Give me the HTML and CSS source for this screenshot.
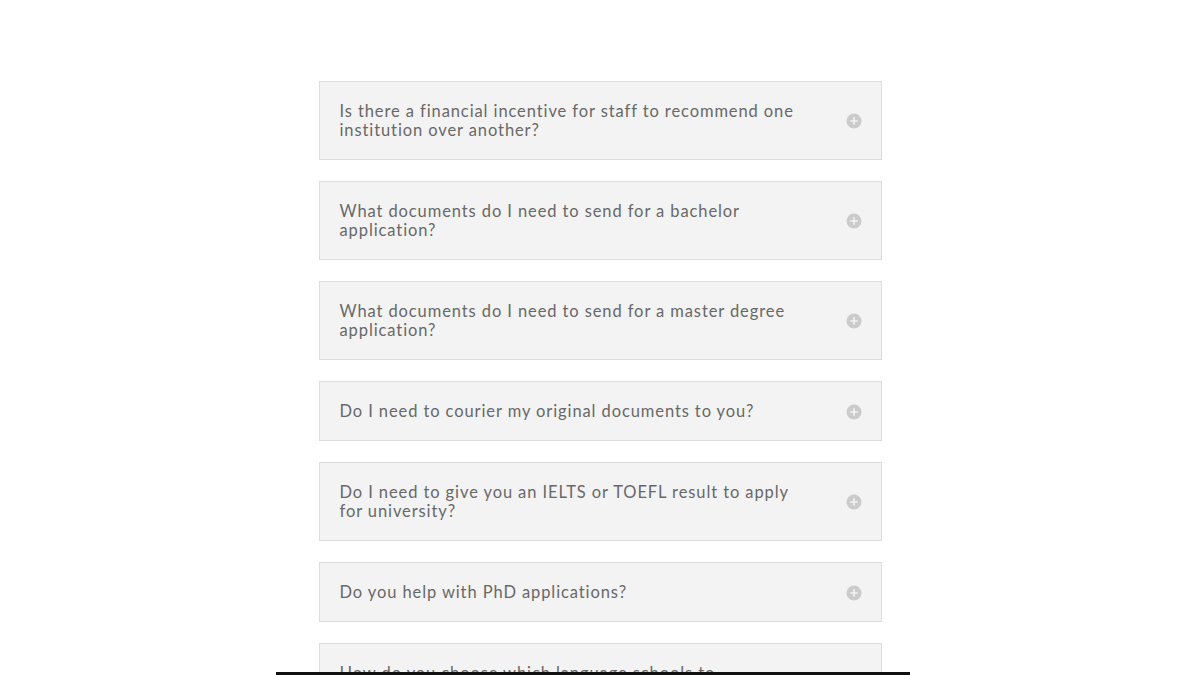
FILE: index.html
```html
<!DOCTYPE html>
<html lang="en">
<head>
<meta charset="utf-8">
<title>FAQ</title>
<link rel="stylesheet" href="styles.css">
</head>
<body>
<main class="faq">
  <div class="item"><span class="q">Is there a financial incentive for staff to recommend one institution over another?</span><span class="icon"><svg viewBox="0 0 16 16" width="16" height="16"><circle cx="8" cy="8" r="7.5" fill="#cbcbcb"/><path d="M8 4.2v7.6M4.2 8h7.6" stroke="#f3f3f3" stroke-width="1.6"/></svg></span></div>
  <div class="item"><span class="q">What documents do I need to send for a bachelor application?</span><span class="icon"><svg viewBox="0 0 16 16" width="16" height="16"><circle cx="8" cy="8" r="7.5" fill="#cbcbcb"/><path d="M8 4.2v7.6M4.2 8h7.6" stroke="#f3f3f3" stroke-width="1.6"/></svg></span></div>
  <div class="item"><span class="q">What documents do I need to send for a master degree application?</span><span class="icon"><svg viewBox="0 0 16 16" width="16" height="16"><circle cx="8" cy="8" r="7.5" fill="#cbcbcb"/><path d="M8 4.2v7.6M4.2 8h7.6" stroke="#f3f3f3" stroke-width="1.6"/></svg></span></div>
  <div class="item"><span class="q">Do I need to courier my original documents to you?</span><span class="icon"><svg viewBox="0 0 16 16" width="16" height="16"><circle cx="8" cy="8" r="7.5" fill="#cbcbcb"/><path d="M8 4.2v7.6M4.2 8h7.6" stroke="#f3f3f3" stroke-width="1.6"/></svg></span></div>
  <div class="item"><span class="q">Do I need to give you an IELTS or TOEFL result to apply for university?</span><span class="icon"><svg viewBox="0 0 16 16" width="16" height="16"><circle cx="8" cy="8" r="7.5" fill="#cbcbcb"/><path d="M8 4.2v7.6M4.2 8h7.6" stroke="#f3f3f3" stroke-width="1.6"/></svg></span></div>
  <div class="item"><span class="q">Do you help with PhD applications?</span><span class="icon"><svg viewBox="0 0 16 16" width="16" height="16"><circle cx="8" cy="8" r="7.5" fill="#cbcbcb"/><path d="M8 4.2v7.6M4.2 8h7.6" stroke="#f3f3f3" stroke-width="1.6"/></svg></span></div>
  <div class="item"><span class="q">How do you choose which language schools to recommend?</span><span class="icon"><svg viewBox="0 0 16 16" width="16" height="16"><circle cx="8" cy="8" r="7.5" fill="#cbcbcb"/><path d="M8 4.2v7.6M4.2 8h7.6" stroke="#f3f3f3" stroke-width="1.6"/></svg></span></div>
</main>
<div class="bar"></div>
</body>
</html>
```

FILE: styles.css
```css
html, body {
  margin: 0;
  padding: 0;
  background: #ffffff;
  overflow: hidden;
  height: 675px;
}
.faq {
  width: 563px;
  margin: 0 auto;
  padding-top: 81px;
  display: flex;
  flex-direction: column;
  gap: 21px;
  font-family: Lato, "Open Sans", sans-serif;
}
.item {
  display: flex;
  align-items: center;
  justify-content: space-between;
  background: #f3f3f3;
  border: 1px solid #dcdcdc;
  padding: 20px 20px 19px 20px;
}
.q {
  flex: 1;
  max-width: 462px;
  font-size: 16.5px;
  line-height: 19px;
  letter-spacing: 0.9px;
  color: #686868;
}
.icon {
  display: flex;
  width: 16px;
  height: 16px;
  margin-right: -1px;
}
.bar {
  position: fixed;
  left: 276px;
  top: 672px;
  width: 634px;
  height: 3px;
  background: #111111;
}
```
